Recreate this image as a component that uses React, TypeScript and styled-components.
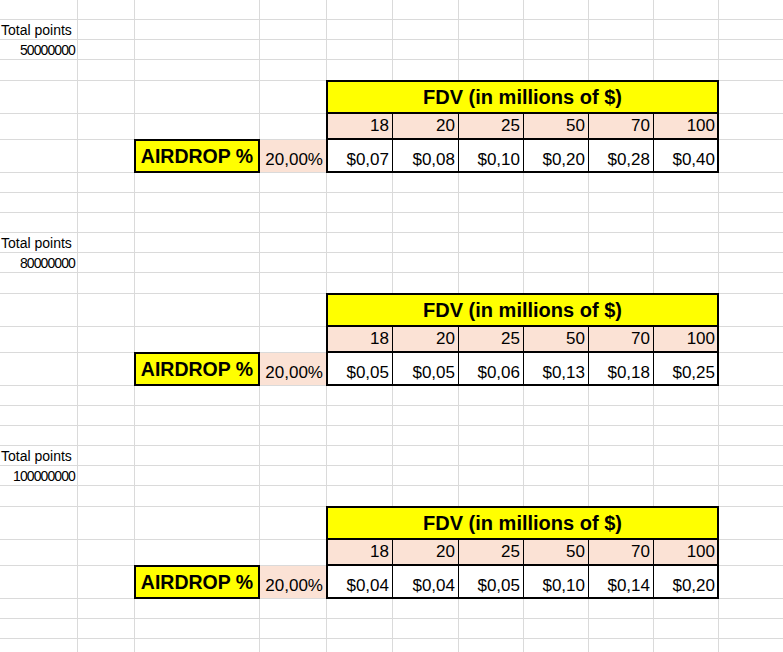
import React from 'react';
import styled, { createGlobalStyle, css } from 'styled-components';

const GlobalStyle = createGlobalStyle`
  html, body {
    margin: 0;
    padding: 0;
    background: #ffffff;
    overflow: hidden;
  }
  body {
    font-family: "Liberation Sans", Arial, sans-serif;
    color: #000000;
  }
`;

const COLS = [77, 56, 124, 66, 65, 65, 64, 64, 64, 64, 64];
const BLOCK_ROWS = [19, 19, 20, 32, 25, 32, 19, 19, 19];
const ROWS = [19, ...BLOCK_ROWS, ...BLOCK_ROWS, ...BLOCK_ROWS];

const GRID = '#dadada';
const YELLOW = '#ffff00';
const PEACH = '#fbe2d5';

const Sheet = styled.div`
  display: grid;
  grid-template-columns: ${COLS.map((c) => `${c}px`).join(' ')};
  grid-template-rows: ${ROWS.map((r) => `${r}px`).join(' ')};
  gap: 1px;
  background: ${GRID};
  width: 783px;
`;

const Row = styled.div`
  display: contents;
`;

const Blank = styled.div`
  background: #ffffff;
`;

const TextCell = styled.div`
  background: #ffffff;
  display: flex;
  align-items: flex-end;
  white-space: nowrap;
  font-size: 14px;
  line-height: normal;
  padding-bottom: 1px;
`;

const Label = styled(TextCell)`
  justify-content: flex-start;
  padding-left: 1px;
`;

const Count = styled(TextCell)`
  justify-content: flex-end;
  padding-right: 2px;
  letter-spacing: -0.9px;
`;

const Header = styled.div`
  grid-column: 5 / span 6;
  background: ${YELLOW};
  display: flex;
  align-items: center;
  justify-content: center;
  font-weight: 700;
  font-size: 20px;
  white-space: nowrap;
  box-shadow: 0 0 0 1px #000, inset 0 0 0 1px #000;
`;

const edgeShadow = (first?: boolean, last?: boolean) => {
  const parts = ['0 0 0 1px #000', 'inset 0 -1px 0 0 #000'];
  if (first) parts.push('inset 1px 0 0 0 #000');
  if (last) parts.push('inset -1px 0 0 0 #000');
  return parts.join(', ');
};

const NumberCell = styled.div<{ $first?: boolean; $last?: boolean }>`
  display: flex;
  align-items: flex-end;
  justify-content: flex-end;
  padding-right: 3px;
  font-size: 17px;
  line-height: normal;
  white-space: nowrap;
  ${({ $first, $last }) => css`
    box-shadow: ${edgeShadow($first, $last)};
  `}
`;

const FdvCell = styled(NumberCell)`
  background: ${PEACH};
  padding-bottom: 3px;
`;

const ValueCell = styled(NumberCell)`
  background: #ffffff;
  padding-bottom: 2px;
`;

const Airdrop = styled.div`
  background: ${YELLOW};
  display: flex;
  align-items: center;
  justify-content: center;
  font-weight: 700;
  font-size: 19.5px;
  white-space: nowrap;
  box-shadow: 0 0 0 1px #000, inset 0 0 0 1px #000;
`;

const Percent = styled.div`
  background: ${PEACH};
  display: flex;
  align-items: flex-end;
  justify-content: flex-end;
  padding-right: 3px;
  padding-bottom: 2px;
  font-size: 17px;
  line-height: normal;
  white-space: nowrap;
`;

const FDVS = ['18', '20', '25', '50', '70', '100'];

const BLOCKS = [
  { total: '50000000', values: ['$0,07', '$0,08', '$0,10', '$0,20', '$0,28', '$0,40'] },
  { total: '80000000', values: ['$0,05', '$0,05', '$0,06', '$0,13', '$0,18', '$0,25'] },
  { total: '100000000', values: ['$0,04', '$0,04', '$0,05', '$0,10', '$0,14', '$0,20'] },
];

const blanks = (n: number, key: string) =>
  Array.from({ length: n }, (_, i) => <Blank key={`${key}-${i}`} />);

const EmptyRow: React.FC<{ id: string }> = ({ id }) => <Row>{blanks(11, id)}</Row>;

export default function App() {
  return (
    <>
      <GlobalStyle />
      <Sheet>
        <EmptyRow id="top" />
        {BLOCKS.map((b, bi) => (
          <React.Fragment key={bi}>
            <Row>
              <Label>Total points</Label>
              {blanks(10, `tp${bi}`)}
            </Row>
            <Row>
              <Count>{b.total}</Count>
              {blanks(10, `ct${bi}`)}
            </Row>
            <EmptyRow id={`e${bi}`} />
            <Row>
              {blanks(4, `fh${bi}`)}
              <Header>FDV (in millions of $)</Header>
              {blanks(1, `fht${bi}`)}
            </Row>
            <Row>
              {blanks(4, `fn${bi}`)}
              {FDVS.map((f, i) => (
                <FdvCell key={f} $first={i === 0} $last={i === FDVS.length - 1}>
                  {f}
                </FdvCell>
              ))}
              {blanks(1, `fnt${bi}`)}
            </Row>
            <Row>
              {blanks(2, `dv${bi}`)}
              <Airdrop>AIRDROP %</Airdrop>
              <Percent>20,00%</Percent>
              {b.values.map((v, i) => (
                <ValueCell key={i} $first={i === 0} $last={i === b.values.length - 1}>
                  {v}
                </ValueCell>
              ))}
              {blanks(1, `dvt${bi}`)}
            </Row>
            <EmptyRow id={`a${bi}`} />
            <EmptyRow id={`b${bi}`} />
            <EmptyRow id={`c${bi}`} />
          </React.Fragment>
        ))}
      </Sheet>
    </>
  );
}
